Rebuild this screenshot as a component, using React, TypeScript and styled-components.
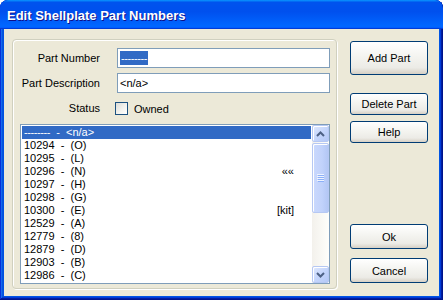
import React from "react";
import styled, { createGlobalStyle } from "styled-components";

const Global = createGlobalStyle`
  html, body { margin: 0; padding: 0; background: #ffffff; }
  body { font-family: "Liberation Sans", Arial, sans-serif; }
`;

const Window = styled.div`
  width: 443px;
  height: 300px;
  box-sizing: border-box;
  display: flex;
  flex-direction: column;
  border-radius: 8px 8px 0 0;
  background: #0054e3;
  box-shadow: inset -1px -1px #00138c, inset 1px 1px #0831d9, inset -2px -2px #001ea0,
    inset 2px 2px #166aee, inset -3px -3px #003bda, inset 3px 3px #0855dd;
  padding: 0 4px 4px 4px;
  overflow: hidden;
`;

const TitleBar = styled.div`
  height: 29px;
  margin: 0 -4px;
  flex: none;
  display: flex;
  align-items: center;
  padding: 0 7px;
  border-radius: 8px 8px 0 0;
  background: linear-gradient(180deg, #0997ff, #0053ee 8%, #0050ee 40%, #06f 88%, #06f 93%, #005bff 95%, #003dd7 96%, #003dd7);
`;

const TitleText = styled.span`
  color: #ffffff;
  font-family: "Liberation Sans", Arial, sans-serif;
  font-weight: bold;
  font-size: 13px;
  text-shadow: 1px 1px #0f1089;
  padding-top: 1px;
`;

const Client = styled.div`
  flex: 1;
  background: #ece9d8;
  display: flex;
  padding: 10px 11px 7px 8px;
  font-size: 11px;
  color: #000;
`;

const GroupBox = styled.div`
  width: 325px;
  box-sizing: border-box;
  border: 1px solid #d0d0bf;
  border-radius: 4px;
  box-shadow: inset 1px 1px #ffffff, 1px 1px #ffffff;
  padding: 8px 6px 4px 7px;
  display: flex;
  flex-direction: column;
`;

const FormGrid = styled.div`
  display: grid;
  grid-template-columns: 80px 213px;
  column-gap: 17px;
  row-gap: 5px;
  align-items: center;
`;

const Label = styled.label<{ $offset?: number }>`
  text-align: right;
  font-size: 11px;
  line-height: 13px;
  margin-top: ${(p) => p.$offset ?? 0}px;
`;

const TextBox = styled.div`
  height: 20px;
  box-sizing: border-box;
  border: 1px solid #7f9db9;
  background: #fff;
  display: flex;
  align-items: center;
  padding-left: 2px;
  font-size: 11px;
  white-space: pre;
`;

const Selected = styled.span`
  background: #316ac5;
  color: #fff;
  padding: 1px 1px;
  letter-spacing: -0.4px;
`;

const StatusRow = styled.div`
  display: flex;
  align-items: center;
  gap: 6px;
  margin-left: -2px;
  margin-top: 4px;
`;

const CheckBox = styled.span`
  width: 13px;
  height: 13px;
  box-sizing: border-box;
  border: 1px solid #1c5180;
  background: linear-gradient(135deg, #dcdcd7 0%, #f4f4f0 60%, #ffffff 100%);
`;

const ListBox = styled.div`
  margin-top: 9px;
  height: 160px;
  box-sizing: border-box;
  border: 1px solid #7f9db9;
  background: #fff;
  display: flex;
`;

const Items = styled.div`
  flex: 1;
  padding: 1px;
  display: flex;
  flex-direction: column;
  overflow: hidden;
`;

const Row = styled.div<{ $sel?: boolean }>`
  height: 13px;
  line-height: 13px;
  flex: none;
  display: flex;
  padding-left: 2px;
  padding-right: 17px;
  background: ${(p) => (p.$sel ? "#316ac5" : "transparent")};
  color: ${(p) => (p.$sel ? "#fff" : "#000")};
  font-size: 11px;
  white-space: pre;
`;

const RowText = styled.span`
  flex: 1;
`;

const Dashes = styled.span`
  letter-spacing: -0.4px;
`;

const Tag = styled.span`
  flex: none;
`;

const ScrollBar = styled.div`
  width: 17px;
  flex: none;
  display: flex;
  flex-direction: column;
  background: linear-gradient(90deg, #f3f1ec, #fefefb);
`;

const ScrollButton = styled.div`
  height: 17px;
  box-sizing: border-box;
  flex: none;
  border: 1px solid #b6c8f3;
  border-radius: 2px;
  box-shadow: inset 1px 1px #ffffff;
  background: linear-gradient(135deg, #dfe8fd 0%, #c5d6fc 50%, #b4c8f6 100%);
  display: flex;
  align-items: center;
  justify-content: center;
`;

const Track = styled.div`
  flex: 1;
  padding-top: 1px;
`;

const Thumb = styled.div`
  height: 70px;
  box-sizing: border-box;
  border: 1px solid #b6c8f3;
  border-radius: 2px;
  box-shadow: inset 1px 1px #ffffff;
  background: linear-gradient(90deg, #cad9fd 0%, #c1d2fb 60%, #b3c7f5 100%);
  display: flex;
  align-items: center;
  justify-content: center;
`;

const ButtonColumn = styled.div`
  width: 78px;
  margin-left: 13px;
  padding-top: 2px;
  padding-bottom: 6px;
  display: flex;
  flex-direction: column;
`;

const Button = styled.div<{ $h: number; $gap: number }>`
  height: ${(p) => p.$h}px;
  margin-top: ${(p) => p.$gap}px;
  box-sizing: border-box;
  flex: none;
  border: 1px solid #003c74;
  border-radius: 3px;
  background: linear-gradient(180deg, #ffffff 0%, #f4f4f0 45%, #ecebe6 80%, #d6d0c5 100%);
  display: flex;
  align-items: center;
  justify-content: center;
  font-size: 11px;
  color: #000;
`;

const Spacer = styled.div`
  flex: 1;
`;

const Arrow = ({ up }: { up?: boolean }) => (
  <svg width="9" height="6" viewBox="0 0 9 6">
    <path
      d={up ? "M1 5 L4.5 1.5 L8 5" : "M1 1 L4.5 4.5 L8 1"}
      stroke="#4d6185"
      strokeWidth="2"
      fill="none"
    />
  </svg>
);

const Grip = () => (
  <svg width="7" height="8" viewBox="0 0 7 8">
    {[0, 2, 4, 6].map((y) => (
      <g key={y}>
        <rect x="0" y={y} width="7" height="1" fill="#eef3fe" />
        <rect x="1" y={y + 1} width="7" height="1" fill="#8cb0f8" />
      </g>
    ))}
  </svg>
);

const rows: [string, string, string][] = [
  ["10294", "(O)", ""],
  ["10295", "(L)", ""],
  ["10296", "(N)", "««"],
  ["10297", "(H)", ""],
  ["10298", "(G)", ""],
  ["10300", "(E)", "[kit]"],
  ["12529", "(A)", ""],
  ["12779", "(8)", ""],
  ["12879", "(D)", ""],
  ["12903", "(B)", ""],
  ["12986", "(C)", ""],
];

export default function App() {
  return (
    <>
      <Global />
      <Window>
        <TitleBar>
          <TitleText>Edit Shellplate Part Numbers</TitleText>
        </TitleBar>
        <Client>
          <GroupBox>
            <FormGrid>
              <Label>Part Number</Label>
              <TextBox>
                <Selected>--------</Selected>
              </TextBox>
              <Label>Part Description</Label>
              <TextBox>{"<n/a>"}</TextBox>
              <Label $offset={4}>Status</Label>
              <StatusRow>
                <CheckBox />
                <span>Owned</span>
              </StatusRow>
            </FormGrid>
            <ListBox>
              <Items>
                <Row $sel>
                  <RowText>
                    <Dashes>--------</Dashes>
                    {"  -  <n/a>"}
                  </RowText>
                </Row>
                {rows.map(([num, code, tag]) => (
                  <Row key={num}>
                    <RowText>{`${num}  -  ${code}`}</RowText>
                    {tag && <Tag>{tag}</Tag>}
                  </Row>
                ))}
              </Items>
              <ScrollBar>
                <ScrollButton>
                  <Arrow up />
                </ScrollButton>
                <Track>
                  <Thumb>
                    <Grip />
                  </Thumb>
                </Track>
                <ScrollButton>
                  <Arrow />
                </ScrollButton>
              </ScrollBar>
            </ListBox>
          </GroupBox>
          <ButtonColumn>
            <Button $h={34} $gap={0}>Add Part</Button>
            <Button $h={22} $gap={18}>Delete Part</Button>
            <Button $h={22} $gap={6}>Help</Button>
            <Spacer />
            <Button $h={25} $gap={0}>Ok</Button>
            <Button $h={25} $gap={9}>Cancel</Button>
          </ButtonColumn>
        </Client>
      </Window>
    </>
  );
}
